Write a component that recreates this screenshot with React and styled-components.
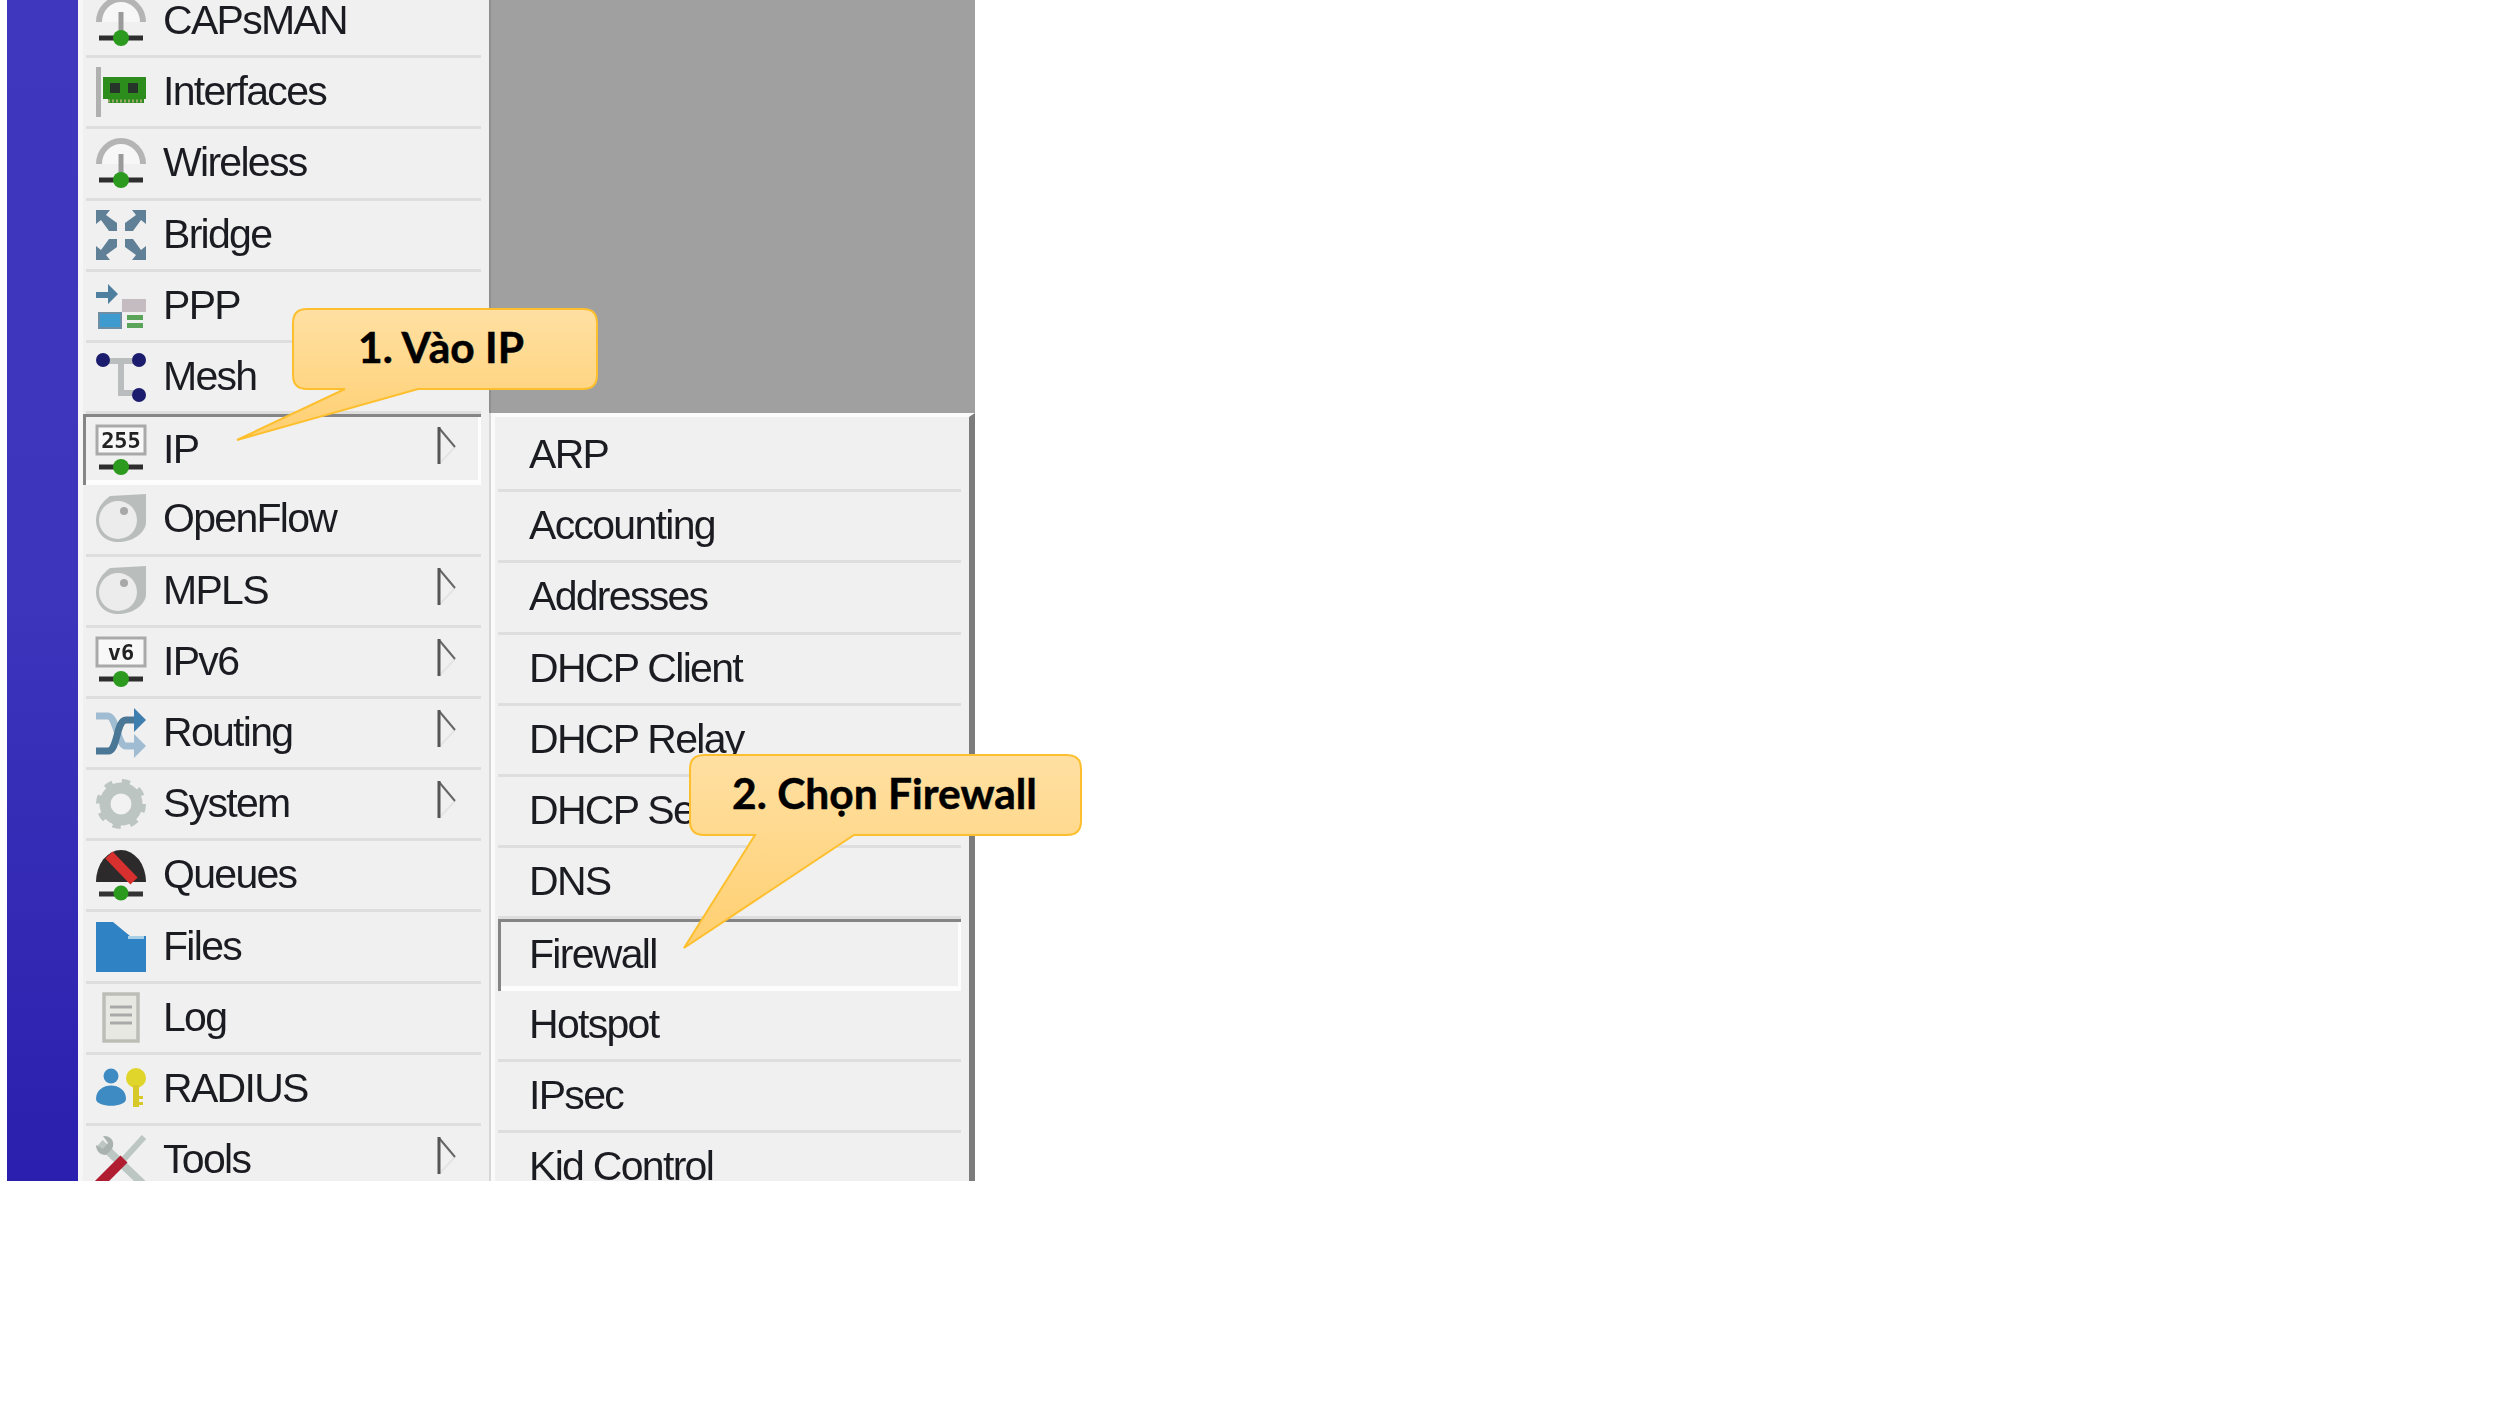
import React from "react";
import styled, { createGlobalStyle } from "styled-components";

const GlobalStyle = createGlobalStyle`
  html, body {
    margin: 0;
    padding: 0;
    background: #fff;
  }
`;

const Page = styled.div`
  position: relative;
  width: 2500px;
  height: 1406px;
  overflow: hidden;
  background: #fff;
`;

const Screenshot = styled.div`
  display: grid;
  grid-template-columns: 71px 5px 406px 2px 484px;
  width: 968px;
  height: 1181px;
  margin-left: 7px;
  overflow: hidden;
  filter: blur(0.7px);
`;

const BlueBar = styled.div`
  background: linear-gradient(180deg, #3f38bf 0%, #3d35bc 50%, #2a1fae 100%);
`;

const Gap = styled.div`
  background: #f6f6f6;
`;

const MainMenu = styled.div`
  background: #f0f0f0;
  margin-top: -13px;
  height: 1194px;
`;

const MenuDivider = styled.div`
  display: flex;
  flex-direction: column;
`;

const DividerTop = styled.div`
  height: 413px;
  background: #8f8f8f;
`;

const DividerBottom = styled.div`
  flex: 1;
  background: #d6d6d6;
`;

const RightColumn = styled.div`
  display: flex;
  flex-direction: column;
  min-height: 0;
`;

const GreyPanel = styled.div`
  height: 413px;
  flex: none;
  background: #a0a0a0;
`;

const SubMenu = styled.div`
  flex: 1;
  min-height: 0;
  overflow: hidden;
  padding: 4px 8px 0 3px;
  background: #f0f0f0;
  border-top: 4px solid #fbfbfb;
  border-left: 4px solid #fafafa;
  border-right: 6px solid #7c7c7c;
`;

const Row = styled.div`
  box-sizing: border-box;
  display: flex;
  align-items: center;
  height: 71.2px;
  margin: ${(p) => (p.$selected ? "0 8px 0 0" : "0 8px 0 3px")};
  padding-left: ${(p) => (p.$selected ? "13px" : "10px")};
  border-bottom: ${(p) => (p.$selected ? "none" : "3px solid #dedede")};
  box-shadow: ${(p) =>
    p.$selected
      ? "inset 3px 3px 0 #858585, inset -3px -5px 0 #fdfdfd"
      : "none"};
`;

const SubRow = styled(Row)`
  margin: 0;
  padding-left: 31px;
`;

const IconBox = styled.span`
  flex: none;
  display: block;
  width: 50px;
  height: 50px;
  margin-right: 17px;
`;

const Label = styled.span`
  flex: 1;
  margin-bottom: 2px;
  font-family: "Liberation Sans", Arial, sans-serif;
  font-size: 41px;
  letter-spacing: -1.7px;
  line-height: 50px;
  color: #1b1b22;
  white-space: nowrap;
`;

const ArrowBox = styled.svg`
  flex: none;
  width: 20px;
  height: 38px;
  margin: 0 24px 8px 0;
`;

const CalloutBox = styled.div`
  position: absolute;
  left: ${(p) => p.$left}px;
  top: ${(p) => p.$top}px;
  width: ${(p) => p.$width}px;
  height: 82px;
  display: flex;
  align-items: center;
  justify-content: center;
`;

const CalloutShape = styled.svg`
  position: absolute;
  left: 0;
  top: 0;
  overflow: visible;
`;

const CalloutText = styled.span`
  position: relative;
  font-family: Lato, "Noto Sans", sans-serif;
  font-weight: 700;
  font-size: 42.5px;
  line-height: 1;
  color: #000;
  white-space: nowrap;
  margin: -4px ${(p) => p.$nudge || 0}px 0 0;
  -webkit-text-stroke: 0.5px #000;
`;

const Arrow = () => (
  <ArrowBox viewBox="0 0 20 38">
    <path d="M2 37 L18 20" stroke="#e4e4e4" strokeWidth="2" fill="none" />
    <path d="M2 1 L18 20" stroke="#666" strokeWidth="2" fill="none" />
    <path d="M2 0 V37" stroke="#555" strokeWidth="3" fill="none" />
  </ArrowBox>
);

const Net = () => (
  <>
    <path d="M3 42 H47" stroke="#2e2e2e" strokeWidth="5" />
    <circle cx="25" cy="42" r="8" fill="#2b9a1e" />
  </>
);

const Glyph = ({ children }) => (
  <IconBox>
    <svg viewBox="0 0 50 50" width="50" height="50" overflow="visible">
      {children}
    </svg>
  </IconBox>
);

const AntennaIcon = () => (
  <Glyph>
    <path d="M3 26 A22 23 0 0 1 47 26" fill="#f7f7f7" stroke="#b4b4b4" strokeWidth="6" />
    <path d="M25 16 V40" stroke="#9a9a9a" strokeWidth="5" />
    <Net />
  </Glyph>
);

const InterfacesIcon = () => (
  <Glyph>
    <rect x="0" y="0" width="5" height="50" fill="#b0b0b0" />
    <path d="M7 10 H50 V32 H48 V36 H12 V32 H7 Z" fill="#2c8c1c" />
    <rect x="14" y="16" width="10" height="10" fill="#26352a" />
    <rect x="32" y="16" width="10" height="10" fill="#26352a" />
    <path d="M12 34 H48" stroke="#9aa870" strokeWidth="3" strokeDasharray="2 2" />
  </Glyph>
);

const BridgeArrow = ({ rotate }) => (
  <path
    transform={`rotate(${rotate} 25 25)`}
    d="M0 0 H14 L10 5 L21 13 V21 H13 L5 10 L0 14 Z"
    fill="#5f8096"
  />
);

const BridgeIcon = () => (
  <Glyph>
    <BridgeArrow rotate={0} />
    <BridgeArrow rotate={90} />
    <BridgeArrow rotate={180} />
    <BridgeArrow rotate={270} />
  </Glyph>
);

const PppIcon = () => (
  <Glyph>
    <path d="M0 11 H12 V3 L22 13 L12 23 V17 H0 Z" fill="#4f7f9f" />
    <rect x="3" y="32" width="22" height="15" fill="#3e9bd0" stroke="#6d8fa5" strokeWidth="2" />
    <rect x="26" y="18" width="24" height="13" fill="#c4bcc0" />
    <rect x="31" y="34" width="16" height="5" fill="#5aa55a" />
    <rect x="31" y="42" width="16" height="5" fill="#5aa55a" />
  </Glyph>
);

const MeshIcon = () => (
  <Glyph>
    <path d="M8 9 H42 M25 9 V41 H42" stroke="#b9bdbd" strokeWidth="6" fill="none" />
    <circle cx="7" cy="8" r="7" fill="#1c1c6e" />
    <circle cx="43" cy="8" r="7" fill="#1c1c6e" />
    <circle cx="43" cy="43" r="7" fill="#1c1c6e" />
  </Glyph>
);

const ScreenIcon = ({ text, size }) => (
  <Glyph>
    <rect x="1" y="1" width="48" height="28" fill="#f8f8f8" stroke="#a9a9a9" strokeWidth="3" />
    <text
      x="25"
      y="23"
      textAnchor="middle"
      fontFamily="'DejaVu Sans Mono', monospace"
      fontWeight="700"
      fontSize={size}
      fill="#222"
    >
      {text}
    </text>
    <Net />
  </Glyph>
);

const IpIcon = () => <ScreenIcon text="255" size={22} />;
const Ipv6Icon = () => <ScreenIcon text="v6" size={22} />;

const DiscIcon = () => (
  <Glyph>
    <path
      d="M14 2 L50 0 V28 C50 38 38 48 22 48 C8 48 0 38 0 26 C0 16 6 8 14 2 Z"
      fill="#b9bdbc"
    />
    <ellipse cx="22" cy="26" rx="19" ry="19" fill="#ececec" />
    <circle cx="28" cy="17" r="4" fill="#a8a8a8" />
  </Glyph>
);

const RoutingIcon = () => (
  <Glyph>
    <path d="M0 8 H12 C20 8 22 38 30 38 H40" stroke="#9fbcd2" strokeWidth="7" fill="none" />
    <path d="M38 26 L50 38 L38 50 Z" fill="#9fbcd2" />
    <path d="M0 43 H12 C22 43 20 12 30 12 H40" stroke="#4b7797" strokeWidth="7" fill="none" />
    <path d="M38 0 L50 12 L38 24 Z" fill="#3f7fb0" />
  </Glyph>
);

const SystemIcon = () => (
  <Glyph>
    <circle cx="25" cy="25" r="16" fill="none" stroke="#bcc5c2" strokeWidth="11" />
    <circle
      cx="25"
      cy="25"
      r="22"
      fill="none"
      stroke="#bcc5c2"
      strokeWidth="6"
      strokeDasharray="8 9.3"
    />
    <circle cx="25" cy="25" r="10" fill="#f2f2f2" />
  </Glyph>
);

const QueuesIcon = () => (
  <Glyph>
    <path d="M0 32 A25 32 0 0 1 50 32 Z" fill="#2c2a2a" />
    <path d="M13 5 L38 31" stroke="#d8302e" strokeWidth="10" />
    <path d="M3 44 H47" stroke="#333" strokeWidth="5" />
    <circle cx="25" cy="43" r="7.5" fill="#2b9a1e" />
  </Glyph>
);

const FilesIcon = () => (
  <Glyph>
    <path d="M0 0 H17 L34 14 H50 V50 H0 Z" fill="#2f83c4" />
    <rect x="32" y="14" width="16" height="3" fill="#a9cfe8" />
  </Glyph>
);

const LogIcon = () => (
  <Glyph>
    <rect x="8" y="1" width="34" height="47" fill="#e8e8e2" stroke="#bdbdb8" strokeWidth="3.5" />
    <path d="M14 14 H36 M14 22 H36 M14 30 H36" stroke="#a9a9a9" strokeWidth="3" />
  </Glyph>
);

const RadiusIcon = () => (
  <Glyph>
    <g transform="translate(0 5)">
      <circle cx="15" cy="7" r="7.5" fill="#3e8bc4" />
      <path d="M0 30 C0 12 30 12 30 30 C30 39 0 39 0 30 Z" fill="#3e8bc4" />
      <circle cx="40" cy="9" r="10" fill="#e0d52a" />
      <path d="M37 16 H43 V38 H37 Z M43 27 H47 V30 H43 Z M43 33 H47 V36 H43 Z" fill="#d8c92a" />
    </g>
  </Glyph>
);

const ToolsIcon = () => (
  <Glyph>
    <path d="M4 8 L48 50" stroke="#bcc6c3" strokeWidth="8" />
    <path d="M0 10 L7 14 L12 8 L7 1 C14 0 20 6 16 14 L10 20 C4 20 0 16 0 10 Z" fill="#aab2af" />
    <path d="M48 2 L28 24" stroke="#bcc6c3" strokeWidth="6" />
    <path d="M2 50 L28 24" stroke="#b01c30" strokeWidth="10" />
  </Glyph>
);

const MAIN_ITEMS = [
  { label: "CAPsMAN", icon: AntennaIcon },
  { label: "Interfaces", icon: InterfacesIcon },
  { label: "Wireless", icon: AntennaIcon },
  { label: "Bridge", icon: BridgeIcon },
  { label: "PPP", icon: PppIcon },
  { label: "Mesh", icon: MeshIcon },
  { label: "IP", icon: IpIcon, arrow: true, selected: true },
  { label: "OpenFlow", icon: DiscIcon },
  { label: "MPLS", icon: DiscIcon, arrow: true },
  { label: "IPv6", icon: Ipv6Icon, arrow: true },
  { label: "Routing", icon: RoutingIcon, arrow: true },
  { label: "System", icon: SystemIcon, arrow: true },
  { label: "Queues", icon: QueuesIcon },
  { label: "Files", icon: FilesIcon },
  { label: "Log", icon: LogIcon },
  { label: "RADIUS", icon: RadiusIcon },
  { label: "Tools", icon: ToolsIcon, arrow: true },
];

const SUB_ITEMS = [
  "ARP",
  "Accounting",
  "Addresses",
  "DHCP Client",
  "DHCP Relay",
  "DHCP Server",
  "DNS",
  "Firewall",
  "Hotspot",
  "IPsec",
  "Kid Control",
];

const Callout = ({ id, left, top, width, baseA, baseB, tipX, tipY, nudge, children }) => (
  <CalloutBox $left={left} $top={top} $width={width}>
    <CalloutShape width={width} height="82">
      <defs>
        <linearGradient id={id} gradientUnits="userSpaceOnUse" x1="0" y1="0" x2="0" y2={tipY}>
          <stop offset="0" stopColor="#ffe0a3" />
          <stop offset="1" stopColor="#ffcf70" />
        </linearGradient>
      </defs>
      <path
        d={`M15 1 H${width - 15} Q${width - 1} 1 ${width - 1} 15 V67 Q${width - 1} 81 ${
          width - 15
        } 81 H${baseB} L${tipX} ${tipY} L${baseA} 81 H15 Q1 81 1 67 V15 Q1 1 15 1 Z`}
        fill={`url(#${id})`}
        stroke="#fdbf2d"
        strokeWidth="2"
      />
    </CalloutShape>
    <CalloutText $nudge={nudge}>{children}</CalloutText>
  </CalloutBox>
);

const App = () => {
  return (
    <Page>
      <GlobalStyle />
      <Screenshot>
        <BlueBar />
        <Gap />
        <MainMenu>
          {MAIN_ITEMS.map((item) => {
            const Icon = item.icon;
            return (
              <Row key={item.label} $selected={item.selected}>
                <Icon />
                <Label>{item.label}</Label>
                {item.arrow && <Arrow />}
              </Row>
            );
          })}
        </MainMenu>
        <MenuDivider>
          <DividerTop />
          <DividerBottom />
        </MenuDivider>
        <RightColumn>
          <GreyPanel />
          <SubMenu>
            {SUB_ITEMS.map((label) => (
              <SubRow key={label} $selected={label === "Firewall"}>
                <Label>{label}</Label>
              </SubRow>
            ))}
          </SubMenu>
        </RightColumn>
      </Screenshot>
      <Callout id="callout-ip" left={292} top={308} width={306} baseA={53} baseB={126} tipX={-55} tipY={132} nudge={8}>
        1. Vào IP
      </Callout>
      <Callout id="callout-fw" left={689} top={754} width={393} baseA={66} baseB={165} tipX={-5} tipY={194} nudge={2}>
        2. Chọn Firewall
      </Callout>
    </Page>
  );
};

export default App;
